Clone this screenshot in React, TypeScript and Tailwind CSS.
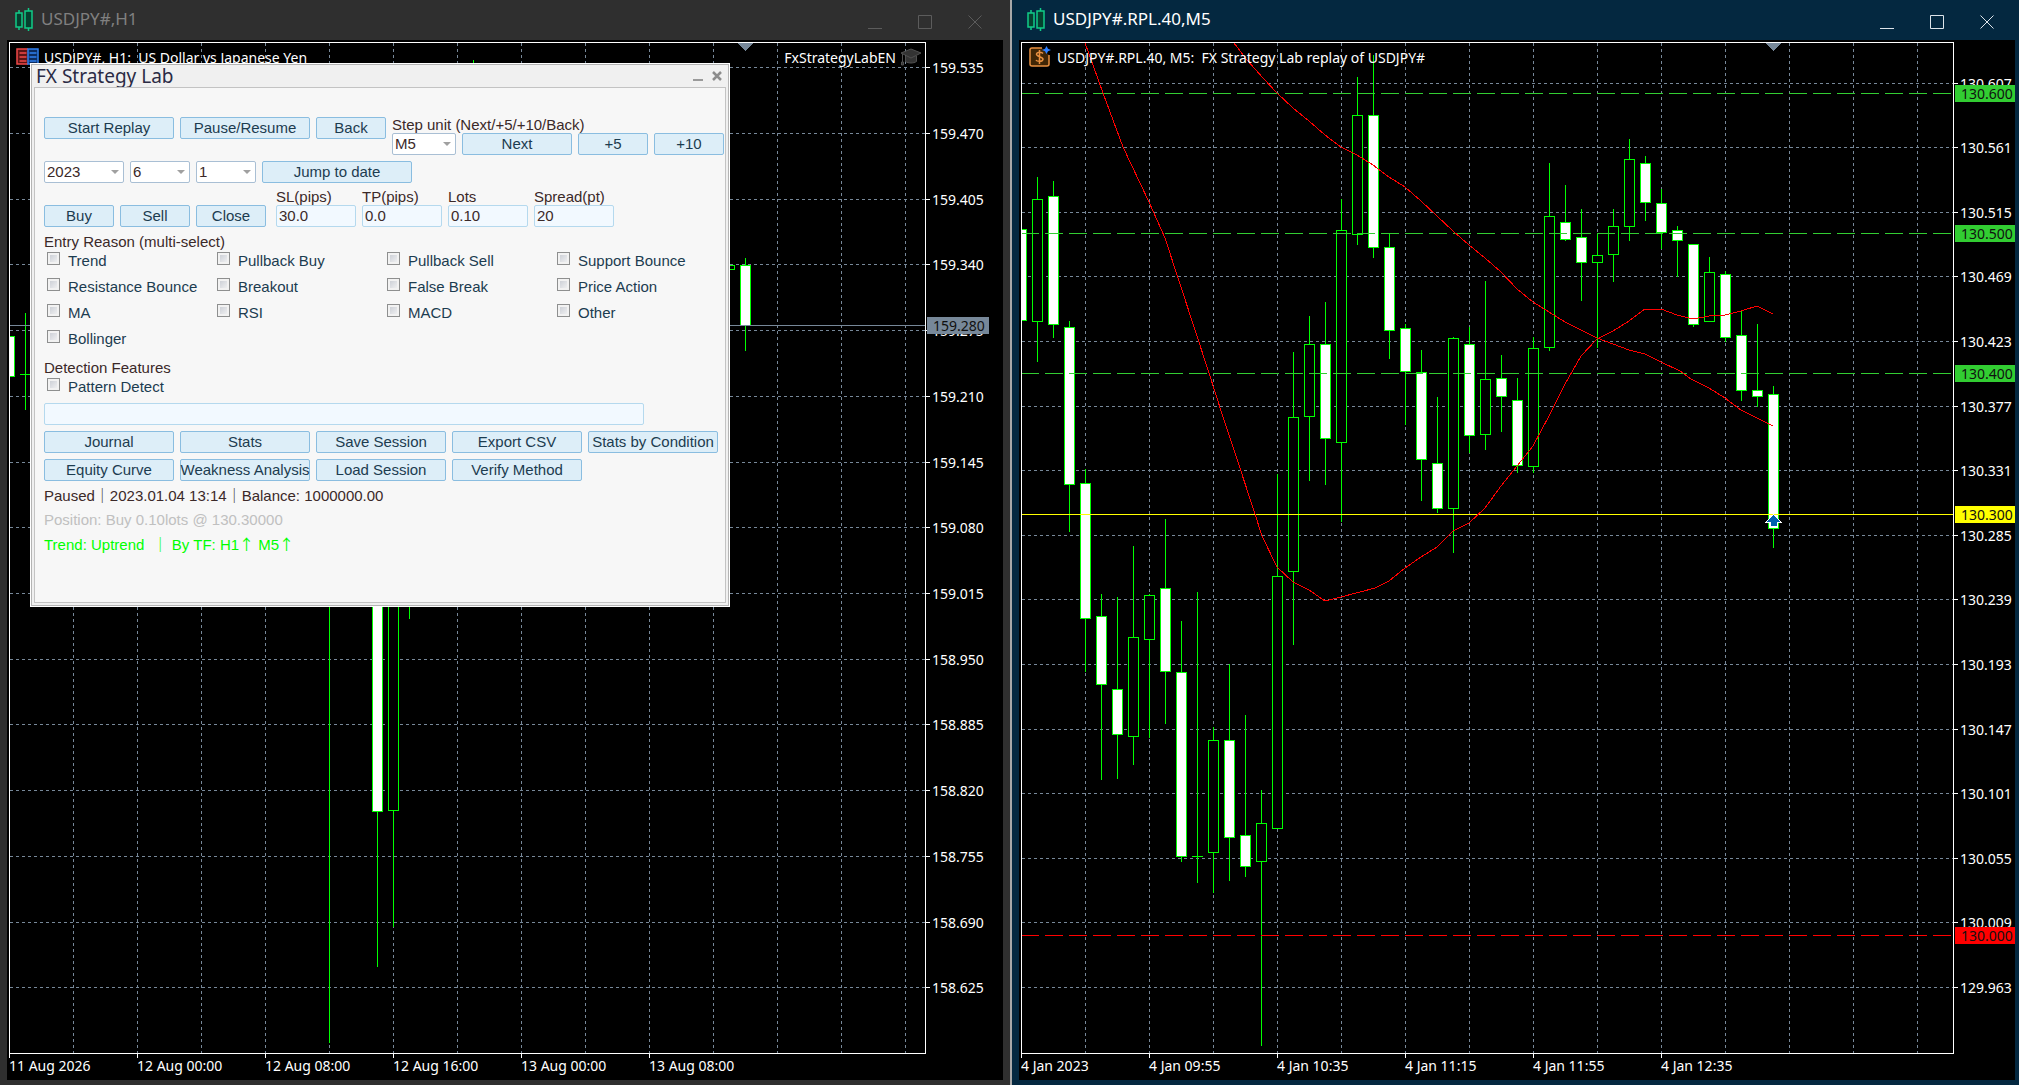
import type { ReactNode } from 'react'
import clsx from 'clsx'

// [center x, high, body top, body bottom, low, filled] in plot pixels
type Candle = [number, number, number, number, number, boolean]

interface Level {
  y: number
  label: string
  color: string
  dashed?: boolean
}

interface ChartProps {
  header: ReactNode
  prices: [number, string][]
  times: string[]
  candles: Candle[]
  averages?: string[]
  levels: Level[]
  shiftX: number
  axisClass: string
  children?: ReactNode
}

const GRID = '#778899'
const UP = '#00ff00'

const GRID_X = Array.from({ length: 14 }, (_, i) => 63 + 64 * i)

const H1_PRICES: [number, string][] = [
  [24, '159.535'], [90, '159.470'], [156, '159.405'], [221, '159.340'], [287, '159.275'],
  [353, '159.210'], [419, '159.145'], [484, '159.080'], [550, '159.015'], [616, '158.950'],
  [681, '158.885'], [747, '158.820'], [813, '158.755'], [879, '158.690'], [944, '158.625'],
]

const M5_PRICES: [number, string][] = [
  [40, '130.607'], [104, '130.561'], [169, '130.515'], [233, '130.469'], [298, '130.423'],
  [363, '130.377'], [427, '130.331'], [492, '130.285'], [556, '130.239'], [621, '130.193'],
  [686, '130.147'], [750, '130.101'], [815, '130.055'], [879, '130.009'], [944, '129.963'],
]

const H1_TIMES = ['11 Aug 2026', '12 Aug 00:00', '12 Aug 08:00', '12 Aug 16:00', '13 Aug 00:00', '13 Aug 08:00']
const M5_TIMES = ['4 Jan 2023', '4 Jan 09:55', '4 Jan 10:35', '4 Jan 11:15', '4 Jan 11:55', '4 Jan 12:35']

const H1_CANDLES: Candle[] = [
  [-1, 293, 293, 333, 333, true],
  [15, 270, 331, 331, 367, false],
  [319, 400, 420, 480, 1000, true],
  [367, 300, 320, 768, 924, true],
  [383, 300, 320, 767, 884, false],
  [399, 300, 320, 480, 576, true],
  [463, 17, 60, 120, 200, false],
  [719, 222, 222, 226, 226, false],
  [735, 215, 222, 282, 308, true],
]

const M5_CANDLES: Candle[] = [
  [-1, 186, 186, 277, 277, true],
  [15, 134, 156, 278, 319, false],
  [31, 138, 153, 281, 295, true],
  [47, 278, 284, 441, 489, true],
  [63, 426, 440, 575, 629, true],
  [79, 551, 573, 641, 737, true],
  [95, 554, 646, 691, 736, true],
  [111, 503, 594, 693, 722, false],
  [127, 551, 552, 596, 695, false],
  [143, 476, 545, 628, 681, true],
  [159, 578, 629, 813, 819, true],
  [175, 549, 813, 813, 840, false],
  [191, 684, 697, 809, 850, false],
  [207, 621, 697, 794, 838, true],
  [223, 672, 792, 823, 834, true],
  [239, 747, 780, 818, 1003, false],
  [255, 431, 533, 785, 785, false],
  [271, 309, 374, 528, 602, false],
  [287, 273, 301, 373, 438, false],
  [303, 259, 301, 395, 442, true],
  [319, 156, 187, 399, 479, false],
  [335, 34, 72, 191, 202, false],
  [351, 12, 72, 204, 215, true],
  [367, 190, 204, 287, 316, true],
  [383, 281, 285, 328, 382, true],
  [399, 307, 329, 416, 458, true],
  [415, 354, 420, 465, 470, true],
  [431, 294, 295, 465, 510, false],
  [447, 284, 301, 392, 410, true],
  [463, 238, 336, 391, 407, false],
  [479, 312, 335, 353, 389, true],
  [495, 335, 357, 422, 430, true],
  [511, 294, 305, 423, 430, false],
  [527, 120, 173, 304, 308, false],
  [543, 142, 179, 196, 198, true],
  [559, 166, 194, 219, 258, true],
  [575, 191, 212, 219, 305, false],
  [591, 166, 183, 211, 239, false],
  [607, 96, 116, 183, 198, false],
  [623, 113, 120, 159, 178, true],
  [639, 146, 160, 189, 206, true],
  [655, 183, 187, 197, 234, true],
  [671, 201, 201, 281, 284, true],
  [687, 214, 229, 278, 278, false],
  [703, 228, 231, 294, 299, true],
  [719, 268, 292, 347, 358, true],
  [735, 281, 347, 353, 364, true],
  [751, 343, 351, 485, 505, true],
]

const FAST_MA =
  '63,0 81,50 101,104 127,159 143,195 173,287 187,330 201,374 213,410 233,471 240,493 255,524 271,539 287,547 303,558 319,554 338,549 353,545 367,538 383,525 399,514 415,504 431,488 447,480 463,465 479,443 495,423 511,403 527,373 543,341 559,313 575,296 591,288 607,278 623,266 639,266 655,272 671,276 687,273 703,272 719,268 735,263 751,271'
const SLOW_MA =
  '212,0 225,17 241,35 255,50 271,65 287,78 303,92 319,104 335,112 351,122 367,134 383,144 399,158 415,173 431,188 447,202 463,215 479,229 495,246 511,259 527,269 543,279 559,287 575,295 591,301 607,307 623,311 639,319 658,328 669,336 687,345 703,355 719,367 735,375 751,383'

const H1_LEVELS: Level[] = [{ y: 282, label: '159.280', color: GRID }]

const M5_LEVELS: Level[] = [
  { y: 50, label: '130.600', color: '#32cd32', dashed: true },
  { y: 190, label: '130.500', color: '#32cd32', dashed: true },
  { y: 330, label: '130.400', color: '#32cd32', dashed: true },
  { y: 471, label: '130.300', color: '#ffff00' },
  { y: 892, label: '130.000', color: '#ff0000', dashed: true },
]

const REASONS = [
  'Trend', 'Pullback Buy', 'Pullback Sell', 'Support Bounce',
  'Resistance Bounce', 'Breakout', 'False Break', 'Price Action',
  'MA', 'RSI', 'MACD', 'Other',
  'Bollinger',
]

const ACTIONS = [
  'Journal', 'Stats', 'Save Session', 'Export CSV', 'Stats by Condition',
  'Equity Curve', 'Weakness Analysis', 'Load Session', 'Verify Method',
]

function Chart({ header, prices, times, candles, averages = [], levels, shiftX, axisClass, children }: ChartProps) {
  return (
    <div className="flex min-h-0 flex-1 flex-col bg-black pl-[2px] pt-[2px]">
      <div className="flex min-h-0 flex-1">
        <div className="relative min-w-0 flex-1 border border-white">
          <svg className="absolute inset-0 h-full w-full" shapeRendering="crispEdges">
            <g stroke={GRID} strokeDasharray="3 3">
              {GRID_X.map((x) => (
                <line key={x} x1={x + 0.5} x2={x + 0.5} y1="0" y2="100%" />
              ))}
              {prices.map(([y]) => (
                <line key={y} x1="0" x2="100%" y1={y + 0.5} y2={y + 0.5} />
              ))}
            </g>
            {candles.map(([x, high, top, bottom, low, filled]) => (
              <g key={x} stroke={UP}>
                <line x1={x + 0.5} x2={x + 0.5} y1={high} y2={top} />
                <line x1={x + 0.5} x2={x + 0.5} y1={bottom} y2={low} />
                {top === bottom ? (
                  <line x1={x - 5} x2={x + 6} y1={top + 0.5} y2={top + 0.5} />
                ) : (
                  <rect x={x - 4.5} y={top + 0.5} width="10" height={bottom - top} fill={filled ? '#ffffff' : '#000000'} />
                )}
              </g>
            ))}
            {levels.map((level) => (
              <line
                key={level.label}
                x1="-1"
                x2="100%"
                y1={level.y + 0.5}
                y2={level.y + 0.5}
                stroke={level.color}
                strokeDasharray={level.dashed ? '18 6' : undefined}
              />
            ))}
            {averages.map((points) => (
              <polyline key={points} points={points} fill="none" stroke="#ff0000" />
            ))}
            <path d={`M${shiftX - 7} 0h15l-7.5 8z`} fill={GRID} />
            {children}
          </svg>
          {header}
        </div>
        <div className={clsx('shrink-0', axisClass)}>
          <svg className="h-full w-full font-['Noto_Sans'] text-[14px]">
            {prices.map(([y, label]) => (
              <g key={label}>
                <rect y={y + 1} width="4" height="1" fill="#ffffff" />
                <text x="6" y={y + 7} fill="#ffffff">{label}</text>
              </g>
            ))}
            {levels.map((level) => (
              <g key={level.label}>
                <rect x="1" y={level.y - 7} width="62" height="17" fill={level.color} />
                <text x="7" y={level.y + 7} fill="#101010">{level.label}</text>
              </g>
            ))}
          </svg>
        </div>
      </div>
      <svg className="h-[26px] w-full shrink-0 font-['Noto_Sans'] text-[14px]">
        {times.map((label, i) => (
          <g key={label} fill="#ffffff">
            <rect x={i * 128} width="1" height="4" />
            <text x={i * 128} y="17">{label}</text>
          </g>
        ))}
      </svg>
    </div>
  )
}

function CandleLogo() {
  return (
    <svg className="h-6 w-[18px]" viewBox="0 0 18 24" fill="#06402f" stroke="#10cc88" strokeWidth="1.5">
      <path d="M4 2v3M4 19v3M13.5 0v3M13.5 20v3" />
      <rect x="1" y="5" width="6" height="14" />
      <rect x="10" y="3" width="7" height="17" />
    </svg>
  )
}

function TitleBar({ title, active }: { title: string; active?: boolean }) {
  return (
    <div className={clsx('flex h-10 shrink-0 items-center pl-[15px]', active ? 'pr-[7px] text-white' : 'pr-[10px] text-[#808080]')}>
      <CandleLogo />
      <h1 className="ml-2 flex-1 pb-0.5 font-['Noto_Sans'] text-[17px] leading-6">{title}</h1>
      <div className={clsx('flex', active ? 'text-[#dde4ea]' : 'text-[#5c5c5c]')}>
        <WindowButton label="Minimize"><path d="M0 13.5h14" /></WindowButton>
        <WindowButton label="Maximize"><path d="M.5 .5h13v13H.5z" /></WindowButton>
        <WindowButton label="Close"><path d="M.5 .5l13 13M13.5 .5l-13 13" /></WindowButton>
      </div>
    </div>
  )
}

function WindowButton({ label, children }: { label: string; children: ReactNode }) {
  return (
    <button type="button" aria-label={label} className="flex h-10 w-[50px] items-center justify-center pt-1">
      <svg className="h-3.5 w-3.5" viewBox="0 0 14 14" fill="none" stroke="currentColor">{children}</svg>
    </button>
  )
}

function PanelButton({ children, className = 'w-[130px]' }: { children: ReactNode; className?: string }) {
  return (
    <button
      type="button"
      className={clsx(
        'flex h-[22px] shrink-0 items-center justify-center whitespace-nowrap rounded-[2px] border border-[#8abde0] bg-[#ddeef8] text-[#1c3c50]',
        className,
      )}
    >
      {children}
    </button>
  )
}

function PanelSelect({ label, value, className }: { label: string; value: string; className: string }) {
  return (
    <div className={clsx('relative h-[22px] shrink-0', className)}>
      <select
        aria-label={label}
        defaultValue={value}
        className="h-full w-full appearance-none rounded-[2px] border border-[#a9bfd4] bg-white pl-0.5 leading-5"
      >
        <option>{value}</option>
      </select>
      <svg className="pointer-events-none absolute right-[5px] top-[9px] h-1 w-2" viewBox="0 0 8 4">
        <path d="M0 0h8L4 4z" fill="#a0a0a0" />
      </svg>
    </div>
  )
}

function PanelField({ label, value }: { label: string; value: string }) {
  return (
    <label className="block w-20">
      <span className="block whitespace-nowrap leading-4">{label}</span>
      <input
        type="text"
        defaultValue={value}
        className="block h-[22px] w-full rounded-[2px] border border-[#b5d9ee] bg-[#f2f9ff] pl-0.5"
      />
    </label>
  )
}

function PanelCheck({ label }: { label: string }) {
  return (
    <label className="flex h-[26px] items-start gap-2 pl-[3px] pt-0.5 leading-[18px] text-[#1c3c50]">
      <input
        type="checkbox"
        className="h-[13px] w-[13px] shrink-0 appearance-none border border-[#8e8f8f] bg-linear-to-br from-[#c4c8d0] to-[#f8f8f8] shadow-[inset_0_0_0_2px_#f2f2f2]"
      />
      <span className="whitespace-nowrap">{label}</span>
    </label>
  )
}

function StrategyPanel() {
  return (
    <section className="absolute left-[30px] top-[63px] flex h-[544px] w-[700px] flex-col border border-white bg-[#f0f0f0] font-['Liberation_Sans','Noto_Sans_CJK_JP',sans-serif] text-[15px] text-[#3b2929]">
      <div className="flex flex-1 flex-col border border-[#b4b4b4] px-0.5 pb-0.5">
        <div className="flex h-[22px] items-center pl-[2px] pr-1">
          <h2 className="flex-1 font-['Noto_Sans'] text-[19px] leading-[22px] text-[#2b2b45]">FX Strategy Lab</h2>
          <button type="button" aria-label="Minimize panel" className="mr-[9px]">
            <svg className="h-2.5 w-2.5" viewBox="0 0 10 10"><path d="M0 8h10v2H0z" fill="#9a9a9a" /></svg>
          </button>
          <button type="button" aria-label="Close panel">
            <svg className="h-2.5 w-2.5" viewBox="0 0 10 10"><path d="M1 1l8 8M9 1L1 9" stroke="#8c8c8c" strokeWidth="2.5" /></svg>
          </button>
        </div>
        <div className="flex-1 border border-[#c3c3c3] bg-[#f7f7f7] pl-[9px] pt-[29px]">
          <div className="flex items-start gap-1.5">
            <PanelButton>Start Replay</PanelButton>
            <PanelButton>Pause/Resume</PanelButton>
            <PanelButton className="w-[70px]">Back</PanelButton>
            <div>
              <p className="leading-4">Step unit (Next/+5/+10/Back)</p>
              <div className="flex gap-1.5">
                <PanelSelect label="Step unit" value="M5" className="w-16" />
                <PanelButton className="w-[110px]">Next</PanelButton>
                <PanelButton className="w-[70px]">+5</PanelButton>
                <PanelButton className="w-[70px]">+10</PanelButton>
              </div>
            </div>
          </div>

          <div className="mt-1.5 flex gap-1.5">
            <PanelSelect label="Year" value="2023" className="w-20" />
            <PanelSelect label="Month" value="6" className="w-[60px]" />
            <PanelSelect label="Day" value="1" className="w-[60px]" />
            <PanelButton className="w-[150px]">Jump to date</PanelButton>
          </div>

          <div className="mt-1.5 flex items-end gap-2.5">
            <div className="flex gap-1.5">
              <PanelButton className="w-[70px]">Buy</PanelButton>
              <PanelButton className="w-[70px]">Sell</PanelButton>
              <PanelButton className="w-[70px]">Close</PanelButton>
            </div>
            <div className="flex gap-1.5">
              <PanelField label="SL(pips)" value="30.0" />
              <PanelField label="TP(pips)" value="0.0" />
              <PanelField label="Lots" value="0.10" />
              <PanelField label="Spread(pt)" value="20" />
            </div>
          </div>

          <p className="mt-[7px] leading-4">Entry Reason (multi-select)</p>
          <div className="grid w-[680px] grid-cols-4">
            {REASONS.map((reason) => (
              <PanelCheck key={reason} label={reason} />
            ))}
          </div>

          <p className="mt-1.5 leading-4">Detection Features</p>
          <PanelCheck label="Pattern Detect" />

          <input
            type="text"
            aria-label="Note"
            className="mt-px block h-[22px] w-[600px] rounded-[2px] border border-[#b5d9ee] bg-[#f2f9ff] pl-0.5"
          />
          <div className="mt-1.5 flex flex-wrap gap-1.5">
            {ACTIONS.map((action) => (
              <PanelButton key={action}>{action}</PanelButton>
            ))}
          </div>

          <div className="mt-[3px] whitespace-pre leading-6">
            <p>Paused｜2023.01.04 13:14｜Balance: 1000000.00</p>
            <p className="text-[#c0c0c0]">Position: Buy 0.10lots @ 130.30000</p>
            <p className="text-[#00ff00]">
              {'Trend: Uptrend  ｜ By TF: H1'}
              <span className="font-['Noto_Sans_CJK_JP']">↑</span>
              {' M5'}
              <span className="font-['Noto_Sans_CJK_JP']">↑</span>
            </p>
          </div>
        </div>
      </div>
    </section>
  )
}

function DepthIcon() {
  return (
    <svg className="h-[18px] w-6 shrink-0" viewBox="0 0 24 18" fill="none" strokeWidth="1.5">
      <path d="M12 1H1v15h11" fill="#5c1414" stroke="#f04848" />
      <path d="M12 1h10v15H12z" fill="#0c2c60" stroke="#2f80f0" />
      <path d="M3.5 5h7M3.5 9h7M3.5 13h7" stroke="#f04848" />
      <path d="M13.5 5h7M13.5 9h7M13.5 13h7" stroke="#2f80f0" />
    </svg>
  )
}

function SymbolIcon() {
  return (
    <svg className="h-[22px] w-[22px] shrink-0" viewBox="0 0 22 22">
      <path d="M13 2H3a2 2 0 0 0-2 2v14a2 2 0 0 0 2 2h15a2 2 0 0 0 2-2V9" fill="#402606" stroke="#e89040" strokeWidth="1.5" />
      <path
        d="M14 7.5C13 6 8 5.5 7.5 8.2C7.2 11 14 10.5 14 13.3C13.5 16 8 15.8 7 14M10.5 4v14"
        fill="none"
        stroke="#e89040"
        strokeWidth="1.5"
      />
      <path d="M17.5 0l1.5 2.8 3 1.2-3 1.2-1.5 2.8-1.5-2.8-3-1.2 3-1.2z" fill="#2f80ff" />
    </svg>
  )
}

function CapIcon() {
  return (
    <svg className="h-[18px] w-[22px] shrink-0" viewBox="0 0 22 18" fill="#333333" stroke="#505050">
      <path d="M5.5 8v5.500c3 2 8 2 11 0V8" />
      <path d="M11 1l10 4-10 5L1 5z" />
      <path d="M2.5 6v8" fill="none" />
      <path d="M1.500 14h2v3h-2z" />
    </svg>
  )
}

export default function App() {
  return (
    <main className="grid h-screen grid-cols-[1010fr_1009fr] overflow-hidden">
      <div className="relative flex min-w-0 flex-col bg-[#2f2f2f] pb-[5px]">
        <TitleBar title="USDJPY#,H1" />
        <div className="mx-[7px] flex min-h-0 flex-1 flex-col">
          <Chart
            prices={H1_PRICES}
            times={H1_TIMES}
            candles={H1_CANDLES}
            levels={H1_LEVELS}
            shiftX={735}
            axisClass="w-[77px]"
            header={
              <div className="absolute inset-x-0 top-1 flex h-5 items-center pl-1.5 pr-[3px] font-['Noto_Sans'] text-[14px] leading-5 text-white">
                <DepthIcon />
                <span className="ml-1 flex-1 whitespace-pre pt-0.5">{'USDJPY#, H1:  US Dollar vs Japanese Yen'}</span>
                <span className="mr-1 pt-0.5">FxStrategyLabEN</span>
                <CapIcon />
              </div>
            }
          />
        </div>
        <StrategyPanel />
      </div>

      <div className="flex min-w-0 flex-col border-l-2 border-[#a8a8a8] bg-[#042840] pb-[5px]">
        <TitleBar title="USDJPY#.RPL.40,M5" active />
        <div className="ml-[7px] mr-1 flex min-h-0 flex-1 flex-col">
          <Chart
            prices={M5_PRICES}
            times={M5_TIMES}
            candles={M5_CANDLES}
            averages={[FAST_MA, SLOW_MA]}
            levels={M5_LEVELS}
            shiftX={751}
            axisClass="w-[61px]"
            header={
              <div className="absolute inset-x-0 top-1 flex h-5 items-center pl-[7px] font-['Noto_Sans'] text-[14px] leading-5 text-white">
                <SymbolIcon />
                <span className="ml-1.5 whitespace-pre pt-0.5">{'USDJPY#.RPL.40, M5:  FX Strategy Lab replay of USDJPY#'}</span>
              </div>
            }
          >
            <path d="M751.5 472l6.5 7h-3.5v4h-6v-4H745z" fill="#ffffff" stroke="#ffffff" strokeWidth="2" />
            <path d="M751.5 472l6.5 7h-3.5v4h-6v-4H745z" fill="#0060b0" />
          </Chart>
        </div>
      </div>
    </main>
  )
}
